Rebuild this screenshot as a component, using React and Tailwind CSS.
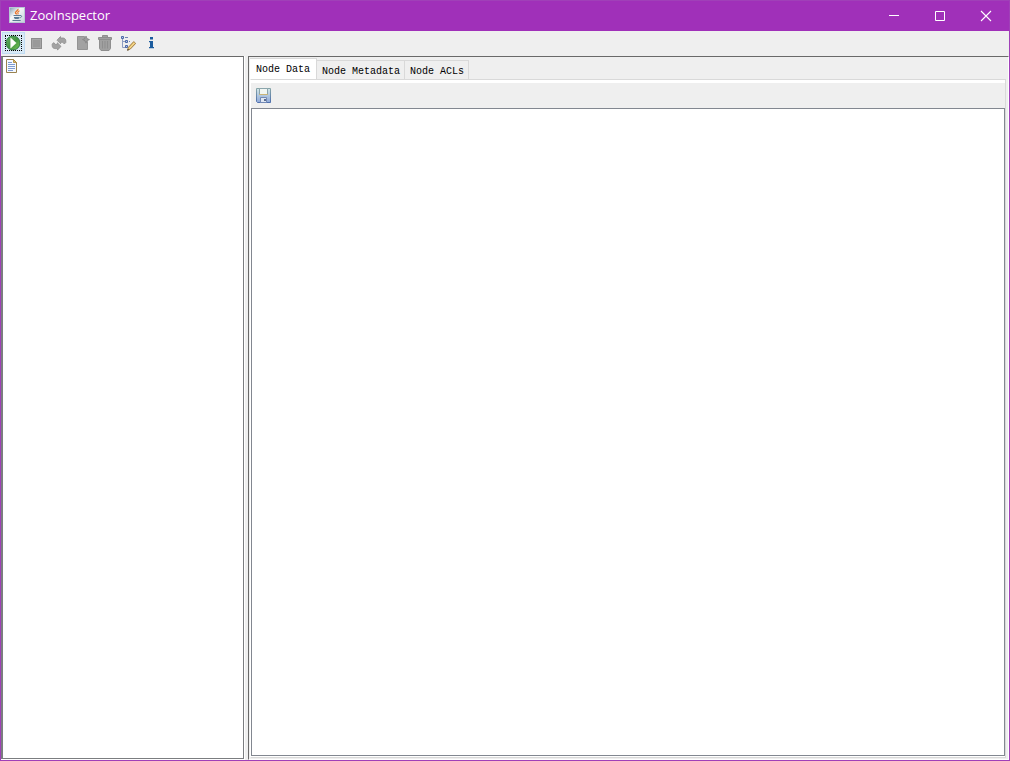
import React, { useState } from "react";

function JavaIcon() {
  return (
    <svg width="16" height="16" viewBox="0 0 16 16" aria-hidden="true">
      <defs>
        <linearGradient id="jbg" x1="0" y1="0" x2="1" y2="1">
          <stop offset="0" stopColor="#7f9bb0" />
          <stop offset=".4" stopColor="#f4f6f7" />
          <stop offset="1" stopColor="#c3d0da" />
        </linearGradient>
      </defs>
      <rect x=".5" y=".5" width="15" height="15" fill="url(#jbg)" stroke="#b7c8d4" />
      <path d="M8.800 2c1 1.500-2.800 2.300-2.300 3.800.2.900 1.100 1 1.200 1.700" fill="none" stroke="#e8762b" strokeWidth="1.500" />
      <path d="M10.500 3.800c-1.600.9-2.200 1.500-1.500 2.300.3.500.1.900-.3 1.300" fill="none" stroke="#e8762b" strokeWidth="1.100" />
      <path d="M4.500 8.500h6.500M5 10.500h5.300M5.500 11.500h4.300M3.500 13.500h8.200" stroke="#5a7a94" strokeWidth="1" />
      <path d="M11 8.500c2.400-.3 2.100 2-.5 2.400" fill="none" stroke="#5a7a94" />
    </svg>
  );
}

function RunIcon() {
  return (
    <svg width="16" height="16" viewBox="0 0 16 16" aria-hidden="true">
      <defs>
        <linearGradient id="run" x1="0" y1="0" x2="1" y2="1">
          <stop offset="0" stopColor="#6cb06c" />
          <stop offset=".5" stopColor="#3f9440" />
          <stop offset="1" stopColor="#7cc856" />
        </linearGradient>
      </defs>
      <circle cx="8" cy="8" r="7" fill="url(#run)" stroke="#2f7d43" strokeWidth="1" />
      <path d="M5.700 3v10l5.500-5z" fill="#fff" stroke="#e9f5e4" strokeWidth=".6" />
    </svg>
  );
}

function StopIcon() {
  return (
    <svg width="16" height="16" viewBox="0 0 16 16" aria-hidden="true">
      <rect x="3.500" y="3.500" width="10" height="10" fill="#9a9a9a" stroke="#8c8c8c" />
      <rect x="4.500" y="4.500" width="8" height="8" fill="none" stroke="#a6a6a6" />
    </svg>
  );
}

function RefreshIcon() {
  const arrow = "M6 5.200L9.500 1.500V3h2.700c1.600.2 2.600 1.300 2.600 2.900v1.600L13.300 9l-1.500-1.700H9.600V8.800z";
  return (
    <svg width="16" height="16" viewBox="0 0 16 16" aria-hidden="true">
      <g fill="#a2a2a2" stroke="#8e8e8e" strokeWidth=".8" strokeLinejoin="round">
        <path d={arrow} />
        <path d={arrow} transform="rotate(180 8 8.300)" />
      </g>
    </svg>
  );
}

function AddIcon() {
  return (
    <svg width="16" height="16" viewBox="0 0 16 16" aria-hidden="true">
      <path d="M3.500 1.500h7v5h3v8h-10z" fill="#a2a2a2" stroke="#949494" />
      <path d="M12 1l1 2.600 2.500 1-2.500 1.100-1 2.500-1-2.500-2.500-1.100 2.500-1z" fill="#9c9c9c" stroke="#858585" strokeWidth=".8" />
    </svg>
  );
}

function TrashIcon() {
  return (
    <svg width="16" height="16" viewBox="0 0 16 16" aria-hidden="true">
      <path d="M5.500 2.500v-2h5v2M1.500 2.500h13v2h-13zM2.500 4.500h11v9l-1.500 2h-8l-1.500-2z" fill="#a0a0a0" stroke="#8e8e8e" />
      <path d="M5.500 6v7.500M8 6v7.500M10.500 6v7.500" stroke="#8f8f8f" />
    </svg>
  );
}

function TreeEditIcon() {
  return (
    <svg width="16" height="16" viewBox="0 0 16 16" aria-hidden="true">
      <path d="M2.500 4v8.500H6M2.500 6.500H6" fill="none" stroke="#8d9cc0" />
      <g fill="#b9c8e8" stroke="#4d69a8">
        <path d="M1.500 1.500h2v2h-2zM5.500 5.500h2v2h-2zM5.500 10.500h2v2h-2z" />
      </g>
      <path d="M5 2.500h3M9 6.500h1" stroke="#7185b5" />
      <path d="M7.500 15.300l.9-3 5.300-5.700 2 1.800-5.400 5.700z" fill="#e9c36a" stroke="#8f6b32" strokeWidth=".8" />
      <path d="M7.300 15.500l.5-1.700 1.200 1.100z" fill="#333" />
      <path d="M9.300 13.400l5.300-5.700" stroke="#fff0bd" strokeWidth=".7" />
    </svg>
  );
}

function InfoIcon() {
  return (
    <svg width="16" height="16" viewBox="0 0 16 16" aria-hidden="true">
      <path d="M7 2h3v2.500H7zM6 6h4v6h1v1.300H6V12h1V7.300H6z" fill="#1c5c9e" />
    </svg>
  );
}

function PageIcon() {
  return (
    <svg width="16" height="16" viewBox="0 0 16 16" aria-hidden="true">
      <path d="M2.500 1.500h7l3 3v10h-10z" fill="#f5f9ff" stroke="#9a8350" />
      <path d="M9.500 1.500v3h3z" fill="#e4bf6c" stroke="#a88436" strokeWidth=".8" />
      <path d="M4 4.500h4M4 6.500h7M4 8.500h7M4 10.500h7M4 12.500h5" stroke="#7f9bd0" />
    </svg>
  );
}

function SaveIcon() {
  return (
    <svg width="16" height="16" viewBox="0 0 16 16" aria-hidden="true">
      <defs>
        <linearGradient id="save" x1="0" y1="0" x2="0" y2="1">
          <stop offset="0" stopColor="#d3e6e8" />
          <stop offset="1" stopColor="#8fa9d8" />
        </linearGradient>
        <linearGradient id="saveEdge" x1="0" y1="0" x2="0" y2="1">
          <stop offset="0" stopColor="#86a5a8" />
          <stop offset="1" stopColor="#4f6fae" />
        </linearGradient>
      </defs>
      <path d="M1.500 1.500h14v14h-13l-1-1z" fill="url(#save)" stroke="url(#saveEdge)" />
      <path d="M4.500 1.500h8v6h-8z" fill="#f1f6f3" stroke="#8ba5ac" />
      <path d="M4 7.500h9" stroke="#c9b478" />
      <path d="M5.500 10.500h6v5h-6z" fill="#dfe7f3" stroke="#7289b5" />
      <path d="M9 12h2v2H9z" fill="#5a6c90" />
    </svg>
  );
}

const tools = [
  { label: "Connect", Icon: RunIcon },
  { label: "Disconnect", Icon: StopIcon, disabled: true },
  { label: "Refresh", Icon: RefreshIcon, disabled: true },
  { label: "Add node", Icon: AddIcon, disabled: true },
  { label: "Delete node", Icon: TrashIcon, disabled: true },
  { label: "Node viewers", Icon: TreeEditIcon },
  { label: "About", Icon: InfoIcon },
];

const tabs = ["Node Data", "Node Metadata", "Node ACLs"];

function TitleBar() {
  const control = "flex w-[46px] items-start justify-center pt-[9px] hover:bg-white/20";
  return (
    <header className="flex h-[30px] shrink-0 bg-[#a030b9] text-white">
      <div className="flex flex-1 items-start gap-[5px] pt-[6px] pl-2">
        <JavaIcon />
        <h1 className="text-[13px] leading-4 font-['Open_Sans',sans-serif]">ZooInspector</h1>
      </div>
      <button type="button" aria-label="Minimize" className={control}>
        <svg width="12" height="12"><path d="M1 5.500h10" stroke="#fff" /></svg>
      </button>
      <button type="button" aria-label="Maximize" className={control}>
        <svg width="12" height="12"><path d="M1.500 1.500h9v9h-9z" fill="none" stroke="#fff" /></svg>
      </button>
      <button type="button" aria-label="Close" className={control}>
        <svg width="12" height="12"><path d="M1 1l10 10M11 1L1 11" stroke="#fff" strokeWidth="1.100" /></svg>
      </button>
    </header>
  );
}

function Toolbar() {
  return (
    <div role="toolbar" aria-label="Main" className="flex h-[25px] shrink-0 items-start pl-px pt-px">
      {tools.map(({ label, Icon, disabled }, i) => (
        <button
          key={label}
          type="button"
          aria-label={label}
          disabled={disabled}
          className={
            i === 0
              ? "flex h-[22px] w-[23px] items-center border border-[#c0dcf3] bg-[#d8e9f6] pl-[2px] outline-1 -outline-offset-4 outline-dotted outline-black"
              : "flex h-[22px] w-[23px] items-center border border-transparent pl-[2px]"
          }
        >
          <Icon />
        </button>
      ))}
    </div>
  );
}

export default function App() {
  const [active, setActive] = useState(0);
  return (
    <div className="flex h-screen flex-col border border-[#a040b8] bg-[#efefef] font-['Liberation_Mono',monospace] text-[10px] text-black">
      <TitleBar />
      <Toolbar />
      <main className="flex min-h-0 flex-1">
        <div className="flex w-[244px] shrink-0 border-r border-b border-white">
          <nav aria-label="Nodes" className="flex-1 border border-l-2 border-[#7b7d80] border-t-[#696969] bg-white">
            <button type="button" aria-label="Root node" className="block pt-px pl-px">
              <PageIcon />
            </button>
          </nav>
        </div>
        <section className="ml-[3px] flex min-w-0 flex-1 flex-col border border-[#696969] border-r-white border-b-white pt-px pr-[2px] pb-px pl-px">
          <div role="tablist" className="flex h-[21px] shrink-0 items-end">
            {tabs.map((tab, i) => (
              <button
                key={tab}
                type="button"
                role="tab"
                aria-selected={i === active}
                onClick={() => setActive(i)}
                className={
                  i === active
                    ? "h-[21px] border-t border-r border-[#d9d9d9] bg-white px-[6px] pt-[2px] leading-[18px]"
                    : "h-[19px] border-t border-r border-[#d9d9d9] pr-[4px] pl-[5px] pt-[2px] leading-[18px]"
                }
              >
                {tab}
              </button>
            ))}
          </div>
          <div role="tabpanel" className="flex min-h-0 flex-1 flex-col border border-[#d9d9d9] border-l-white bg-white pt-[3px] pb-px">
            <div className="flex h-[25px] shrink-0 items-start bg-[#efefef] pt-1 pl-1">
              <button type="button" aria-label="Save">
                <SaveIcon />
              </button>
            </div>
            <textarea
              aria-label="Node data"
              className="block min-h-0 w-full flex-1 resize-none border border-[#828790] bg-white p-1 outline-none"
            />
          </div>
        </section>
      </main>
    </div>
  );
}
